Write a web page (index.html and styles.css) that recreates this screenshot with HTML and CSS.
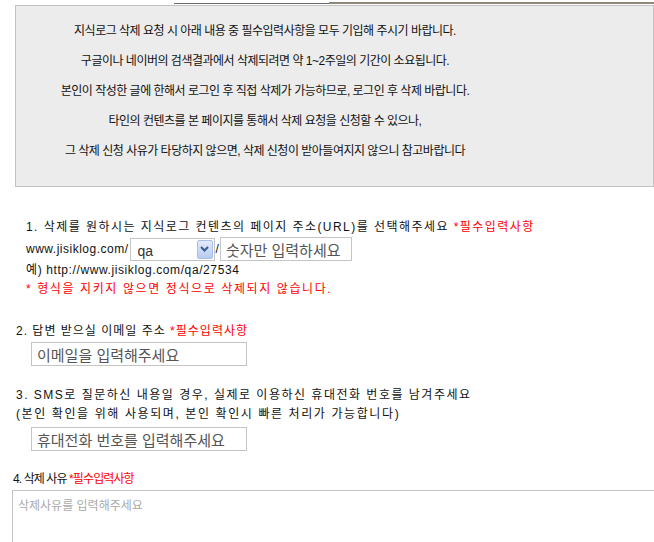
FILE: index.html
```html
<!DOCTYPE html>
<html lang="ko">
<head>
    <meta charset="UTF-8">
    <meta name="viewport" content="width=device-width, initial-scale=1.0">
    <title>지식로그 삭제 요청</title>
    <link rel="stylesheet" href="styles.css">
</head>
<body>
    <div class="topbar">
        <span class="topbar-left"></span>
        <span class="topbar-right"></span>
    </div>

    <div class="notice">
        <p>지식로그 삭제 요청 시 아래 내용 중 필수입력사항을 모두 기입해 주시기 바랍니다.</p>
        <p>구글이나 네이버의 검색결과에서 삭제되려면 약 1~2주일의 기간이 소요됩니다.</p>
        <p>본인이 작성한 글에 한해서 로그인 후 직접 삭제가 가능하므로, 로그인 후 삭제 바랍니다.</p>
        <p>타인의 컨텐츠를 본 페이지를 통해서 삭제 요청을 신청할 수 있으나,</p>
        <p>그 삭제 신청 사유가 타당하지 않으면, 삭제 신청이 받아들여지지 않으니 참고바랍니다</p>
    </div>

    <form class="request-form">
        <div class="field field-url">
            <div class="label label-url">1. 삭제를 원하시는 지식로그 컨텐츠의 페이지 주소(URL)를 선택해주세요 <span class="required">*필수입력사항</span></div>
            <div class="url-row">
                <span class="url-prefix">www.jisiklog.com/</span>
                <span class="select-wrap">
                    <select class="url-select">
                        <option>qa</option>
                    </select>
                    <span class="select-arrow">
                        <svg width="9" height="6" viewBox="0 0 9 6"><path d="M1 1 L4.5 4.5 L8 1" fill="none" stroke="#3b5a8c" stroke-width="2"/></svg>
                    </span>
                </span>
                <span class="url-slash">/</span>
                <input class="text-input url-id" type="text" placeholder="숫자만 입력하세요">
            </div>
            <div class="example">예) http://www.jisiklog.com/qa/27534</div>
            <div class="warning">* 형식을 지키지 않으면 정식으로 삭제되지 않습니다.</div>
        </div>

        <div class="field field-email">
            <div class="label label-email">2. 답변 받으실 이메일 주소 <span class="required">*필수입력사항</span></div>
            <input class="text-input wide-input" type="text" placeholder="이메일을 입력해주세요">
        </div>

        <div class="field field-phone">
            <div class="label label-phone">3. SMS로 질문하신 내용일 경우, 실제로 이용하신 휴대전화 번호를 남겨주세요</div>
            <div class="label label-phone-note">(본인 확인을 위해 사용되며, 본인 확인시 빠른 처리가 가능합니다)</div>
            <input class="text-input wide-input" type="text" placeholder="휴대전화 번호를 입력해주세요">
        </div>

        <div class="field field-reason">
            <div class="label label-reason">4. 삭제 사유 <span class="required">*필수입력사항</span></div>
            <textarea class="reason" placeholder="삭제사유를 입력해주세요"></textarea>
        </div>
    </form>
</body>
</html>
```

FILE: styles.css
```css
html {
    overflow: hidden;
}

body {
    margin: 0;
    font-family: "Liberation Sans", "Noto Sans CJK KR", sans-serif;
    font-size: 12px;
    color: #111111;
    background: #ffffff;
}

/* leftover rules from the page above */
.topbar {
    display: flex;
    height: 5px;
}
.topbar-left {
    width: 155px;
    margin-left: 174px;
    height: 1px;
    margin-top: 3px;
    background: #6b6b6b;
}
.topbar-right {
    flex: 1;
    height: 2px;
    margin-top: 2px;
    background: #8f887a;
}

.notice {
    width: 637px;
    margin-left: 15px;
    padding: 10px 0 20px;
    background: #ececec;
    border: 1px solid #c2c2c2;
}
.notice p {
    width: 498px;
    margin: 0;
    line-height: 30px;
    text-align: center;
    letter-spacing: -0.5px;
}

.required {
    color: #ff0000;
}

/* 1. url */
.field-url {
    margin: 32px 0 0 26px;
}
.label-url {
    line-height: 16px;
    letter-spacing: 1.45px;
}

.url-row {
    display: flex;
    align-items: center;
    height: 24px;
    margin-top: 2px;
}

.url-prefix {
    letter-spacing: 0.5px;
}

.select-wrap {
    position: relative;
    display: inline-block;
    margin-left: 1px;
}

.url-select {
    -webkit-appearance: none;
    appearance: none;
    display: block;
    box-sizing: border-box;
    width: 85px;
    height: 23px;
    padding: 4px 0 0 7px;
    border: 1px solid #c4c4c4;
    border-radius: 0;
    background: #ffffff;
    font-family: "Liberation Sans", sans-serif;
    font-size: 14px;
    color: #333333;
}

.select-arrow {
    position: absolute;
    top: 2px;
    right: 2px;
    width: 16px;
    height: 19px;
    display: flex;
    align-items: center;
    justify-content: center;
    background: linear-gradient(#e2ebfb, #b7cbf2);
    border: 1px solid #a9bfe8;
    border-radius: 2px;
    box-sizing: border-box;
}

.url-slash {
    margin: 0 1px;
}

.text-input {
    box-sizing: border-box;
    height: 24px;
    padding: 1px 5px 0;
    border: 1px solid #c4c4c4;
    font-family: "Noto Sans CJK KR", sans-serif;
    font-size: 15px;
    outline: none;
}
.text-input::placeholder {
    color: #555555;
}

.url-id {
    width: 132px;
}

.example {
    line-height: 19px;
    letter-spacing: 0.6px;
}

.warning {
    line-height: 19px;
    color: #ff0000;
    letter-spacing: 1.6px;
}

/* 2. email */
.field-email {
    margin: 24px 0 0 16px;
}
.label-email {
    line-height: 16px;
    letter-spacing: 1px;
}

.wide-input {
    display: block;
    width: 216px;
    margin: 3px 0 0 15px;
}

/* 3. phone */
.field-phone {
    margin: 20px 0 0 16px;
}
.label-phone {
    line-height: 19px;
    letter-spacing: 1.5px;
}
.label-phone-note {
    line-height: 19px;
    letter-spacing: 1.6px;
}

/* 4. reason */
.field-reason {
    margin: 20px 0 0 13px;
}
.label-reason {
    line-height: 16px;
    letter-spacing: -0.9px;
}

.reason {
    display: block;
    box-sizing: border-box;
    width: 660px;
    height: 120px;
    margin: 3px 0 0 -1px;
    padding: 5px 5px;
    border: 1px solid #c4c4c4;
    font-family: "Noto Sans CJK KR", sans-serif;
    font-size: 12px;
    resize: none;
}
.reason::placeholder {
    color: #aaaaaa;
}
```
